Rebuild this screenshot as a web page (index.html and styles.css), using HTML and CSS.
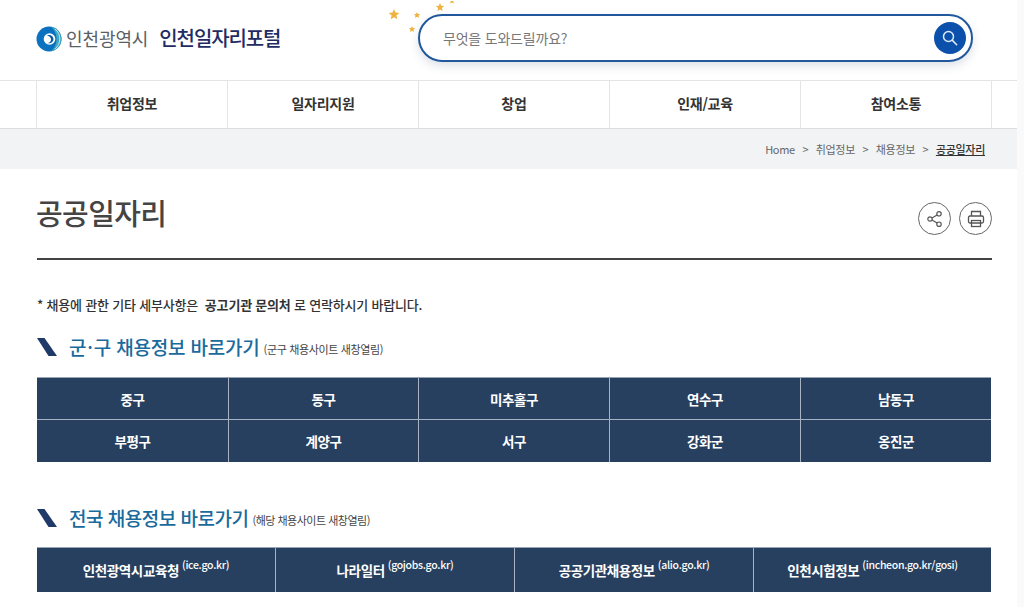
FILE: index.html
```html
<!DOCTYPE html>
<html lang="ko">
<head>
<meta charset="utf-8">
<title>공공일자리</title>
<link rel="stylesheet" href="styles.css">
</head>
<body>
<header class="top">
  <div class="brand">
    <svg class="logo" width="26" height="26" viewBox="0 0 26 26">
      <circle cx="13" cy="13" r="12.500" fill="#0b72bf"/>
      <path d="M15 .7C21 1.700 25.500 6.800 25.500 13S21 24.300 15 25.300C19 22 20.500 17.500 20.500 13S19 4 15 .7z" fill="#3fa9c4"/>
      <path d="M19 3c3 2.500 4.800 6 4.800 10s-1.800 7.500-4.800 10" fill="none" stroke="#bfe6e6" stroke-width="1"/>
      <circle cx="13.500" cy="13" r="5.800" fill="#fff"/>
      <path d="M11 9.500c3-1.500 6.500.5 6.500 3.500s-3 5.200-6 4c2 0 3.500-1.500 3.500-3.500S13 9.800 11 9.500z" fill="#0a5aa5"/>
    </svg>
    <span class="city">인천광역시</span>
    <span class="portal">인천일자리포털</span>
  </div>
  <div class="search-wrap">
    <svg class="stars" width="70" height="40" viewBox="0 0 70 40">
      <path class="star" d="M8 8l1.500 3.600 3.800.3-2.900 2.500.9 3.800L8 16.200l-3.300 2 .9-3.800-2.900-2.500 3.800-.3z"/>
      <path class="star" d="M31 11l.9 2.100 2.300.2-1.700 1.500.5 2.200-2-1.200-2 1.200.5-2.200-1.700-1.500 2.300-.2z"/>
      <path class="star" d="M54 2l1.200 2.800 3 .3-2.300 2 .7 3-2.600-1.600-2.600 1.600.7-3-2.300-2 3-.3z"/>
      <path class="star" d="M26 25l.9 2.100 2.300.2-1.700 1.500.5 2.200-2-1.200-2 1.200.5-2.200-1.700-1.500 2.300-.2z"/>
      <path class="star" d="M66-3l.8 1.900 2 .2-1.500 1.300.5 2-1.800-1-1.800 1 .5-2-1.500-1.300 2-.2z"/>
    </svg>
    <div class="search">
      <span class="placeholder">무엇을 도와드릴까요?</span>
      <span class="search-btn">
        <svg width="18" height="18" viewBox="0 0 18 18" fill="none" stroke="#dfe9f7" stroke-width="1.500" stroke-linecap="round">
          <circle cx="7.500" cy="7.500" r="5"/>
          <path d="M11.400 11.400l4.300 4.300"/>
        </svg>
      </span>
    </div>
  </div>
</header>

<nav class="gnb">
  <ul class="gnb-list">
    <li>취업정보</li>
    <li>일자리지원</li>
    <li>창업</li>
    <li>인재/교육</li>
    <li>참여소통</li>
  </ul>
</nav>

<div class="crumbs">
  <span>Home</span><i>&gt;</i>
  <span>취업정보</span><i>&gt;</i>
  <span>채용정보</span><i>&gt;</i>
  <span class="current">공공일자리</span>
</div>

<main class="content">
  <div class="title-row">
    <h1>공공일자리</h1>
    <div class="tools">
      <span class="tool">
        <svg width="18" height="18" viewBox="0 0 18 18" fill="none" stroke="#555" stroke-width="1.200">
          <circle cx="13" cy="3.800" r="2.200"/>
          <circle cx="4" cy="9" r="2.200"/>
          <circle cx="13" cy="14.200" r="2.200"/>
          <path d="M6 7.900l5.100-3M6 10.100l5.100 3"/>
        </svg>
      </span>
      <span class="tool">
        <svg width="18" height="18" viewBox="0 0 18 18" fill="none" stroke="#555" stroke-width="1.300">
          <path d="M4.500 6V1.500h9V6"/>
          <rect x="1.500" y="6" width="15" height="7" rx="1.500"/>
          <rect x="4.500" y="10.500" width="9" height="6"/>
        </svg>
      </span>
    </div>
  </div>

  <p class="notice">* 채용에 관한 기타 세부사항은 &nbsp;<b>공고기관 문의처</b> 로 연락하시기 바랍니다.</p>

  <h2 class="sec sec-first">
    <svg class="mark" width="20" height="18" viewBox="0 0 20 18"><path d="M0 0h7.500L20 18h-8.500z" fill="#1f3a68"/></svg>
    <span>군<em>·</em>구 채용정보 바로가기</span>
    <small>(군구 채용사이트 새창열림)</small>
  </h2>
  <div class="grid-five">
    <a>중구</a><a>동구</a><a>미추홀구</a><a>연수구</a><a>남동구</a>
    <a>부평구</a><a>계양구</a><a>서구</a><a>강화군</a><a>옹진군</a>
  </div>

  <h2 class="sec sec-second">
    <svg class="mark" width="20" height="18" viewBox="0 0 20 18"><path d="M0 0h7.500L20 18h-8.500z" fill="#1f3a68"/></svg>
    <span>전국 채용정보 바로가기</span>
    <small>(해당 채용사이트 새창열림)</small>
  </h2>
  <div class="grid-four">
    <a>인천광역시교육청<sup>(ice.go.kr)</sup></a>
    <a>나라일터<sup>(gojobs.go.kr)</sup></a>
    <a>공공기관채용정보<sup>(alio.go.kr)</sup></a>
    <a>인천시험정보<sup>(incheon.go.kr/gosi)</sup></a>
  </div>
</main>
</body>
</html>
```
FILE: styles.css
```css
* { box-sizing: border-box; }
html, body { margin: 0; padding: 0; height: 607px; overflow: hidden; }
body {
  background: #fff;
  color: #333;
  font-family: "Noto Sans CJK KR", "Noto Sans", sans-serif;
  border-right: 7px solid #fafafa;
}
ul { list-style: none; margin: 0; padding: 0; }

.top {
  height: 80px;
  width: 1017px;
  padding-left: 36px;
  display: flex;
  align-items: flex-start;
}
.brand { display: flex; align-items: center; height: 78px; width: 382px; }
.logo { flex: none; }
.city { margin: -2px 0 0 4px; font-size: 18px; letter-spacing: -0.100px; color: #5a5f66; }
.portal { margin: -3px 0 0 11px; font-size: 20px; font-weight: 500; letter-spacing: -1.100px; color: #1f2d63; }

.search-wrap { position: relative; padding-top: 14px; }
.stars { position: absolute; left: -32px; top: 1px; }
.star { fill: #eeb23e; }
.search {
  width: 555px;
  height: 48px;
  border: 2px solid #20589b;
  border-radius: 24px;
  background: #fff;
  box-shadow: 0 4px 10px rgba(40, 70, 110, .16);
  display: flex;
  align-items: center;
  justify-content: space-between;
  padding: 0 5px 0 23px;
}
.placeholder { margin-top: -1px; font-size: 14px; letter-spacing: -0.200px; color: #777; }
.search-btn {
  width: 32px;
  height: 32px;
  border-radius: 50%;
  background: #0b51ab;
  display: flex;
  align-items: center;
  justify-content: center;
}

.gnb { height: 49px; border-top: 1px solid #e4e4e4; border-bottom: 1px solid #ddd; padding-left: 36px; }
.gnb-list { display: flex; height: 47px; width: 956px; border-right: 1px solid #e4e4e4; }
.gnb-list li {
  width: 191px;
  padding-bottom: 3px;
  border-left: 1px solid #e4e4e4;
  display: flex;
  align-items: center;
  justify-content: center;
  font-size: 14px;
  font-weight: 700;
  letter-spacing: -0.250px;
  color: #333;
}

.crumbs {
  height: 40px;
  background: #f2f3f5;
  padding-right: 32px;
  display: flex;
  align-items: center;
  justify-content: flex-end;
  font-size: 11px;
  letter-spacing: -0.300px;
  color: #666;
}
.crumbs i { font-style: normal; margin: 0 7.500px; }
.crumbs .current { color: #333; text-decoration: underline; font-weight: 500; }

.content { width: 1017px; padding: 0 25px 0 37px; }
.title-row {
  height: 91px;
  border-bottom: 2px solid #444;
  display: flex;
  align-items: flex-start;
  justify-content: space-between;
  padding-top: 23px;
}
h1 { margin: 0 0 0 -1px; font-size: 29px; font-weight: 500; line-height: 40px; letter-spacing: -0.600px; color: #444; }
.tools { display: flex; gap: 8px; padding-top: 10px; padding-left: 1px; }
.tool {
  width: 33px;
  height: 33px;
  border: 1px solid #666;
  border-radius: 50%;
  display: flex;
  align-items: center;
  justify-content: center;
}

.notice { margin: 34px 0 0; height: 22px; font-size: 13px; font-weight: 500; line-height: 22px; letter-spacing: -0.200px; color: #333; }
.notice b { font-weight: 700; }

.sec { margin: 0; display: flex; align-items: center; height: 28px; font-weight: 500; color: #1a6a9c; }
.sec-first { margin-top: 17px; }
.sec-second { margin-top: 42px; }
.mark { flex: none; margin-right: 12px; }
.sec span { margin-bottom: 2px; font-size: 19px; letter-spacing: -0.200px; }
.sec-second span { letter-spacing: -0.500px; }
.sec em { font-style: normal; margin: 0 1px; }
.sec small { margin: 3px 0 0 4px; font-size: 11px; font-weight: 400; letter-spacing: -0.350px; color: #444; }
.sec-second small { letter-spacing: -0.500px; }

.grid-five, .grid-four { display: grid; width: 954px; background: #27405f; border-top: 1px solid #96a4b5; }
.grid-five { margin-top: 16px; grid-template-columns: 191px 190px 191px 191px 191px; }
.grid-four { margin-top: 15px; grid-template-columns: 238px 239px 239px 238px; }
.grid-five a, .grid-four a {
  display: flex;
  align-items: center;
  justify-content: center;
  color: #fff;
  font-weight: 700;
  font-size: 13.500px;
  letter-spacing: -0.400px;
  border-left: 1px solid #a7b3c2;
}
.grid-five a { height: 42px; border-bottom: 1px solid #a7b3c2; }
.grid-four a { height: 44px; }
.grid-five a:nth-child(5n+1), .grid-four a:first-child { border-left: 0; }
.grid-five a:nth-child(n+6) { border-bottom: 0; }
sup { align-self: flex-start; margin: 10px 0 0 3px; font-size: 10.500px; font-weight: 500; line-height: 14px; letter-spacing: -0.300px; }
```
